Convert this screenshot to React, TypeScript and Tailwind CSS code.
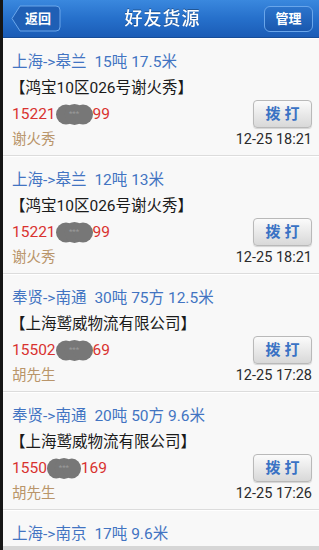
import React from 'react';

interface Cargo {
  route: string;
  spec: string;
  company?: string;
  phoneHead?: string;
  phoneTail?: string;
  blurW?: number;
  name?: string;
  time?: string;
}

const ITEMS: Cargo[] = [
  { route: '上海->皋兰', spec: '15吨 17.5米', company: '【鸿宝10区026号谢火秀】', phoneHead: '15221', phoneTail: '99', blurW: 37, name: '谢火秀', time: '12-25 18:21' },
  { route: '上海->皋兰', spec: '12吨 13米', company: '【鸿宝10区026号谢火秀】', phoneHead: '15221', phoneTail: '99', blurW: 37, name: '谢火秀', time: '12-25 18:21' },
  { route: '奉贤->南通', spec: '30吨 75方 12.5米', company: '【上海鹫威物流有限公司】', phoneHead: '15502', phoneTail: '69', blurW: 37, name: '胡先生', time: '12-25 17:28' },
  { route: '奉贤->南通', spec: '20吨 50方 9.6米', company: '【上海鹫威物流有限公司】', phoneHead: '1550', phoneTail: '169', blurW: 34, name: '胡先生', time: '12-25 17:26' },
  // last one is scrolled mostly off screen, only its first line shows
  { route: '上海->南京', spec: '17吨 9.6米' },
];

const FONT = "font-['Roboto','Noto_Sans_CJK_SC',sans-serif]";

// smudge that hides the middle digits
const Blur = ({ w }: { w: number }) => (
  <span className="relative inline-block h-[21px] align-middle" style={{ width: w }}>
    <svg width={w} height="21" viewBox="0 0 37 21" preserveAspectRatio="none" className="absolute inset-0">
      <ellipse cx="10" cy="10.5" rx="10" ry="10" fill="#777" />
      <ellipse cx="18.5" cy="10.5" rx="10" ry="10.5" fill="#777" />
      <ellipse cx="27" cy="10.5" rx="10" ry="10" fill="#777" />
    </svg>
    <span className="absolute inset-0 flex items-center justify-center text-[8px] text-[#9a9a9a]">***</span>
  </span>
);

const Row = ({ item }: { item: Cargo }) => (
  <div className="h-[118px] shrink-0 bg-[#f8f8f8] border-t border-white border-b border-b-[#dcdcdc] pt-[11px] pb-[2px] pl-[9px] pr-[7px] flex flex-col">
    <div className="h-[26px] flex items-center text-[15.5px] text-[#4274c2] whitespace-nowrap">
      <span>{item.route}</span>
      <span className="ml-[8px]">{item.spec}</span>
    </div>
    {item.company && (
      <>
        <div className="h-[26px] flex items-center text-[15.5px] text-[#1a1a1a] whitespace-nowrap -ml-[2px]">
          {item.company}
        </div>
        <div className="h-[26px] flex items-center justify-between">
          <div className="flex items-center text-[15.5px] text-[#d8322f]">
            <span>{item.phoneHead}</span>
            <Blur w={item.blurW ?? 37} />
            <span>{item.phoneTail}</span>
          </div>
          <button className="w-[59px] h-[28px] rounded-[4px] border border-[#b9b9b9] bg-gradient-to-b from-[#fbfbfb] to-[#d8d8d8] text-[15px] font-bold text-[#3a72c4] tracking-[4px] pl-[4px] shadow-[0_1px_1px_rgba(0,0,0,0.15)]">
            拨打
          </button>
        </div>
        <div className="h-[26px] flex items-center justify-between">
          <span className="text-[14.5px] text-[#b9956a]">{item.name}</span>
          <span className="text-[14.5px] text-[#2a2a2a]">{item.time}</span>
        </div>
      </>
    )}
  </div>
);

export default function App() {
  return (
    <div className={`${FONT} w-[319px] h-[550px] overflow-hidden flex flex-col bg-[#f8f8f8] border-l-[3px] border-l-[#161616]`}>
      {/* title bar */}
      <div className="h-[38px] shrink-0 bg-gradient-to-b from-[#3a88de] via-[#2670cb] to-[#1b5cb6] border-b border-b-[#164d98] flex items-center justify-between pl-[8px] pr-[6px]">
        <button className="relative w-[50px] h-[27px] flex items-center justify-center">
          <svg width="50" height="27" viewBox="0 0 50 27" className="absolute inset-0">
            <path d="M9 1 H45 Q49 1 49 5 V22 Q49 26 45 26 H9 L1 13.5 Z" fill="#1f5fb5" stroke="#6aa6ea" strokeWidth="1" />
          </svg>
          <span className="relative text-[13px] font-bold text-white pl-[4px]">返回</span>
        </button>
        <div className="text-[18px] text-white font-medium tracking-[1px] drop-shadow-[0_-1px_0_rgba(0,0,0,0.3)]">好友货源</div>
        <button className="w-[49px] h-[26px] rounded-[6px] border border-[#6aa6ea] bg-gradient-to-b from-[#2c74cc] to-[#1a58ae] text-[13px] font-bold text-white">
          管理
        </button>
      </div>

      <div className="flex-1 min-h-0 overflow-hidden flex flex-col">
        {ITEMS.map((it, i) => (
          <Row key={i} item={it} />
        ))}
      </div>
      <div className="h-[4px] shrink-0 bg-[#d6d6d6]" />
    </div>
  );
}
